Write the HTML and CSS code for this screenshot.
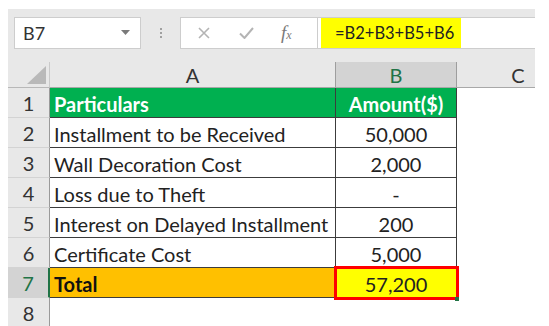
FILE: index.html
```html
<!DOCTYPE html>
<html lang="en">
<head>
    <meta charset="UTF-8">
    <meta name="viewport" content="width=device-width, initial-scale=1.0">
    <title>Total Amount</title>
    <link rel="stylesheet" href="styles.css">
</head>
<body>
    <div class="excel">
        <!-- name box + formula bar -->
        <div class="toolbar">
            <div class="name-box">
                <span>B7</span>
                <svg class="caret" width="9" height="5" viewBox="0 0 9 5"><polygon points="0,0 9,0 4.5,5" fill="#7a7a7a"/></svg>
            </div>
            <div class="grip"><i></i><i></i><i></i></div>
            <div class="formula-box">
                <div class="fx-tools">
                    <svg width="12" height="12" viewBox="0 0 12 12"><path d="M1 1 L11 11 M11 1 L1 11" stroke="#b4b4b4" stroke-width="1.6" fill="none"/></svg>
                    <svg width="15" height="12" viewBox="0 0 15 12"><path d="M1 6.5 L5.5 11 L14 1" stroke="#b4b4b4" stroke-width="2" fill="none"/></svg>
                    <span class="fx">f<sub>x</sub></span>
                </div>
                <div class="formula"><span class="hl">=B2+B3+B5+B6</span></div>
            </div>
        </div>

        <!-- sheet grid -->
        <div class="sheet">
            <div class="corner"><svg width="19" height="18" viewBox="0 0 19 18"><polygon points="19,0 19,18 0,18" fill="#b9b9b9"/></svg></div>
            <div class="hd">A</div>
            <div class="hd sel">B</div>
            <div class="hd last">C</div>

            <div class="rh">1</div>
            <div class="c a green bold">Particulars</div>
            <div class="c b green bold">Amount($)</div>
            <div class="c e"></div>

            <div class="rh">2</div>
            <div class="c a">Installment to be Received</div>
            <div class="c b">50,000</div>
            <div class="c e"></div>

            <div class="rh">3</div>
            <div class="c a">Wall Decoration Cost</div>
            <div class="c b">2,000</div>
            <div class="c e"></div>

            <div class="rh">4</div>
            <div class="c a">Loss due to Theft</div>
            <div class="c b">-</div>
            <div class="c e"></div>

            <div class="rh">5</div>
            <div class="c a">Interest on Delayed Installment</div>
            <div class="c b">200</div>
            <div class="c e"></div>

            <div class="rh">6</div>
            <div class="c a">Certificate Cost</div>
            <div class="c b">5,000</div>
            <div class="c e"></div>

            <div class="rh sel">7</div>
            <div class="c a orange bold">Total</div>
            <div class="c b yellow active">57,200</div>
            <div class="c e"></div>

            <div class="rh">8</div>
            <div class="c e"></div>
            <div class="c e"></div>
            <div class="c e"></div>
        </div>
    </div>
</body>
</html>
```
FILE: styles.css
```css
html, body {
    margin: 0;
    overflow: hidden;
    background: white;
}

body {
    font-family: Lato, "Open Sans", sans-serif;
    color: #222;
}

.excel {
    margin: 9px 0 0 8px;
    width: 527px;
    overflow: hidden;
}

/* top bar */
.toolbar {
    display: flex;
    align-items: center;
    height: 53px;
    padding: 0 0 6px 6px;
    box-sizing: border-box;
    background: #e8e8e8;
}

.name-box {
    display: flex;
    align-items: center;
    justify-content: space-between;
    width: 127px;
    height: 32px;
    box-sizing: border-box;
    padding: 0 10px 0 8px;
    background: white;
    border: 1px solid #cdcdcd;
    font-size: 18px;
    color: #333;
}

.grip {
    display: flex;
    flex-direction: column;
    gap: 2px;
    width: 39px;
    align-items: center;
}

.grip i {
    width: 2px;
    height: 2px;
    background: #a0a0a0;
}

.formula-box {
    display: flex;
    height: 32px;
    flex: 1;
    box-sizing: border-box;
    background: white;
    border: 1px solid #cdcdcd;
    border-right: none;
}

.fx-tools {
    display: flex;
    align-items: center;
    width: 137px;
    box-sizing: border-box;
    padding-left: 17px;
    border-right: 1px solid #cdcdcd;
}

.fx-tools svg:first-child {
    margin-right: 29px;
}

.fx-tools svg:nth-child(2) {
    margin-right: 27px;
}

.fx {
    font-family: "Liberation Serif", serif;
    font-style: italic;
    font-size: 19px;
    color: #7a7a7a;
}

.fx sub {
    font-size: 12px;
    vertical-align: 0;
}

.formula {
    display: flex;
    padding-left: 3px;
}

.hl {
    display: flex;
    align-items: center;
    background: #ffff00;
    padding: 0 7px 0 14px;
    font-size: 16.5px;
    color: #222;
}

/* sheet */
.sheet {
    display: grid;
    grid-template-columns: 42px 286px 121px 122px;
    grid-template-rows: 26px;
    grid-auto-rows: 30px;
    font-size: 20px;
}

.corner, .hd, .rh {
    background: #e8e8e8;
    box-sizing: border-box;
    color: #333;
}

.corner {
    display: flex;
    align-items: flex-end;
    justify-content: flex-end;
    padding: 0 3px 3px 0;
    border-right: 1px solid #cacaca;
    border-bottom: 1px solid #b8b8b8;
}

.hd {
    display: flex;
    align-items: center;
    justify-content: center;
    border-right: 1px solid #cacaca;
    border-bottom: 1px solid #a8a8a8;
}

.hd.sel {
    background: #d3d3d3;
    color: #217346;
    border-right: 1px solid #9e9e9e;
    border-left: 1px solid #9e9e9e;
    margin-left: -1px;
}

.hd.last {
    border-right: none;
}

.rh {
    display: flex;
    align-items: center;
    justify-content: center;
    border-bottom: 1px solid #d3d3d3;
    border-right: 1px solid #9a9a9a;
}

.rh.sel {
    background: #d3d3d3;
    color: #217346;
    border-right: 2px solid #217346;
}

.c {
    display: flex;
    align-items: center;
    box-sizing: border-box;
    white-space: nowrap;
    padding-top: 2px;
}

.a {
    padding-left: 4px;
    border-right: 1px solid #3c3c3c;
    border-bottom: 1px solid #3c3c3c;
}

.b {
    justify-content: center;
    border-right: 1px solid #3c3c3c;
    border-bottom: 1px solid #3c3c3c;
}

.bold {
    font-weight: bold;
}

.green {
    background: #00b050;
    color: white;
}

.orange {
    background: #ffc000;
    color: #111;
}

.yellow {
    background: #ffff00;
}

.active {
    position: relative;
    outline: 3px solid #ff0000;
    outline-offset: -1px;
    z-index: 1;
}

.active::after {
    content: "";
    position: absolute;
    right: -3px;
    bottom: -4px;
    width: 4px;
    height: 4px;
    background: #217346;
}
```
